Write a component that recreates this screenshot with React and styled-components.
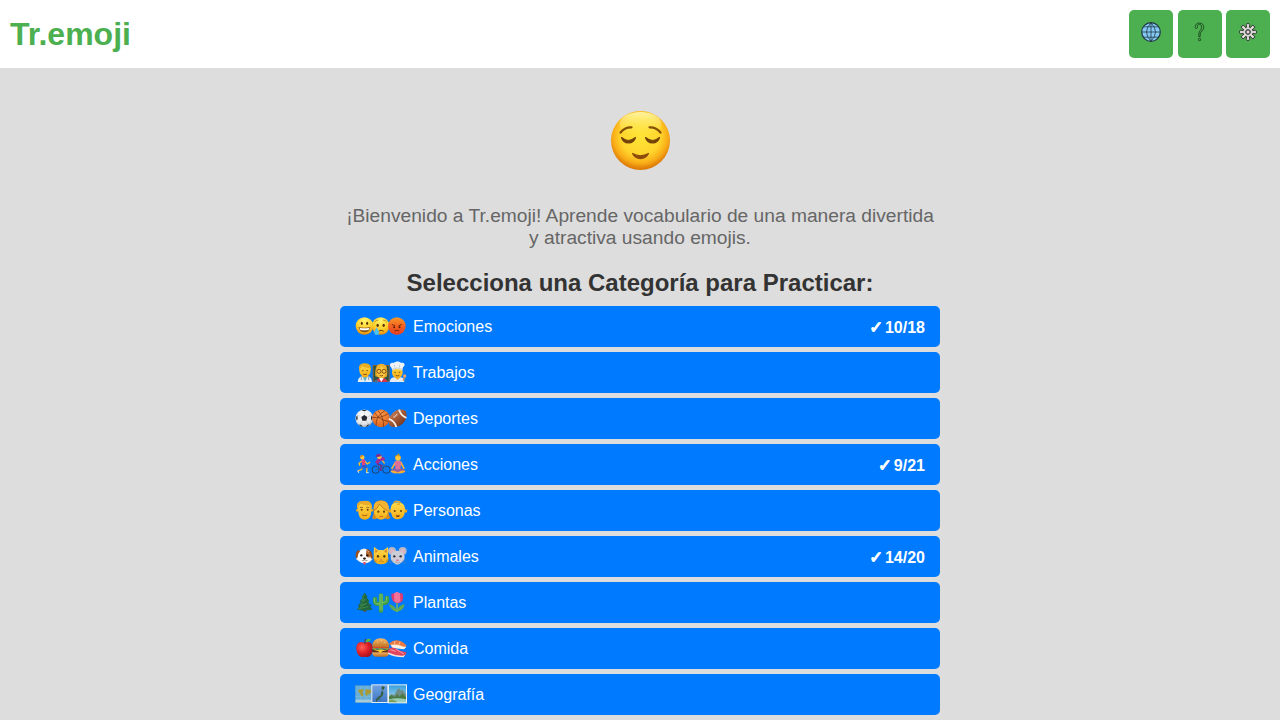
import React from 'react';
import styled, { createGlobalStyle } from 'styled-components';

const GlobalStyle = createGlobalStyle`
  * { box-sizing: border-box; }
  body {
    margin: 0;
    background: #ddd;
    font-family: "Liberation Sans", Arial, sans-serif;
    height: 100vh;
    overflow: hidden;
  }
`;

const Header = styled.header`
  height: 68px;
  padding: 10px;
  background: #fff;
  display: flex;
  justify-content: space-between;
`;
const Title = styled.h1`
  margin: 0;
  color: #4caf50;
  font-size: 32px;
  line-height: 48px;
`;
const Actions = styled.div`
  display: flex;
  gap: 4.45px;
`;
const ActionButton = styled.button`
  width: 44px;
  height: 48px;
  padding: 12px 0 0;
  border: 0;
  border-radius: 5px;
  background: #4caf50;
  display: flex;
  justify-content: center;
  align-items: flex-start;
  cursor: pointer;
`;
const ActionIcon = styled.svg`
  width: 20px;
  height: 20px;
`;
const Main = styled.main`
  width: 600px;
  margin: 0 auto;
  padding-top: 42px;
  display: flex;
  flex-direction: column;
  align-items: center;
`;
const Mascot = styled.svg`
  width: 61px;
  height: 61px;
  margin-left: 1px;
`;
const Welcome = styled.p`
  margin: 34px 0 0;
  font-size: 19.2px;
  line-height: 22px;
  color: #666;
  text-align: center;
`;
const Heading = styled.h2`
  margin: 20px 0 9px;
  font-size: 24px;
  line-height: 28px;
  color: #333;
`;
const List = styled.div`
  width: 100%;
  display: flex;
  flex-direction: column;
  gap: 5px;
`;
const Category = styled.button`
  height: 41px;
  padding: 0 15px;
  border: 0;
  border-radius: 5px;
  background: #007bff;
  color: #fff;
  font: 16px "Liberation Sans", Arial, sans-serif;
  display: flex;
  align-items: center;
  cursor: pointer;
`;
const EmojiStrip = styled.svg`
  width: 53px;
  height: 21px;
  margin-right: 5px;
  overflow: visible;
`;
const Name = styled.span`
  line-height: 18px;
`;
const Score = styled.span`
  margin-left: auto;
  padding-top: 2px;
  font-weight: bold;
  line-height: 18px;
  display: flex;
  gap: 2px;
`;
const Tick = styled.span`
  font-family: "DejaVu Sans", sans-serif;
  font-size: 16.5px;
  -webkit-text-stroke: 1.1px #fff;
`;

const Face = ({ x, fill = 'url(#yellow)', children }) => (
  <g transform={`translate(${x} 30)`}>
    <circle r="26.5" fill={fill} />
    {children}
  </g>
);

const Gradients = () => (
  <defs>
    <radialGradient id="yellow" cx=".5" cy=".2" r=".82">
      <stop offset="0" stopColor="#fff66a" /><stop offset=".6" stopColor="#ffce2a" /><stop offset=".85" stopColor="#f5a516" /><stop offset="1" stopColor="#d97a08" />
    </radialGradient>
    <radialGradient id="mascot" cx=".5" cy=".42" r=".56">
      <stop offset="0" stopColor="#ffe436" /><stop offset=".6" stopColor="#ffd52c" /><stop offset=".83" stopColor="#f9ad18" /><stop offset="1" stopColor="#dd7b07" />
    </radialGradient>
    <linearGradient id="shine" x2="0" y2="1">
      <stop offset="0" stopColor="#fffbb8" stopOpacity=".85" /><stop offset="1" stopColor="#fff05a" stopOpacity="0" />
    </linearGradient>
    <linearGradient id="red" x2="0" y2="1">
      <stop offset="0" stopColor="#f79a2b" /><stop offset=".5" stopColor="#f5631f" /><stop offset="1" stopColor="#e23c24" />
    </linearGradient>
    <linearGradient id="skin" x2="0" y2="1">
      <stop offset="0" stopColor="#ffdc4c" /><stop offset="1" stopColor="#f5ac17" />
    </linearGradient>
    <radialGradient id="ball" cx=".45" cy=".3" r=".75">
      <stop offset="0" stopColor="#fff" /><stop offset=".7" stopColor="#e2e5e8" /><stop offset="1" stopColor="#8a97a8" />
    </radialGradient>
    <radialGradient id="orange" cx=".45" cy=".3" r=".75">
      <stop offset="0" stopColor="#ff9b4a" /><stop offset="1" stopColor="#d9601a" />
    </radialGradient>
    <linearGradient id="brown" x2="0" y2="1">
      <stop offset="0" stopColor="#c27449" /><stop offset="1" stopColor="#7d3a21" />
    </linearGradient>
    <radialGradient id="apple" cx=".35" cy=".35" r=".75">
      <stop offset="0" stopColor="#ff6156" /><stop offset=".5" stopColor="#e0232a" /><stop offset="1" stopColor="#9a0f1b" />
    </radialGradient>
    <linearGradient id="bun" x2="0" y2="1">
      <stop offset="0" stopColor="#f5b967" /><stop offset="1" stopColor="#bf6f22" />
    </linearGradient>
    <linearGradient id="sky" x2="0" y2="1">
      <stop offset="0" stopColor="#3ba0dc" /><stop offset="1" stopColor="#b9e3ef" />
    </linearGradient>
    <linearGradient id="sea" x2="0" y2="1">
      <stop offset="0" stopColor="#6fa2e0" /><stop offset="1" stopColor="#3f76c4" />
    </linearGradient>
  </defs>
);

const Emotions = () => (
  <>
    <Face x={28.5}>
      <ellipse cx="-8" cy="-8" rx="3" ry="5" fill="#5b3206" /><ellipse cx="8" cy="-8" rx="3" ry="5" fill="#5b3206" />
      <path d="M-18 3Q0 7 18 3Q15 19 0 19T-18 3" fill="#8a5516" />
      <path d="M-15 5Q0 8 15 5L13 11Q0 14-13 11Z" fill="#fff" />
    </Face>
    <Face x={77}>
      <path d="M-19-11Q-14-18-7-18M7-18Q14-18 19-11" stroke="#a56d12" strokeWidth="2" fill="none" />
      <ellipse cx="-9" cy="-2" rx="3.5" ry="5" fill="#5b3206" /><ellipse cx="9" cy="-2" rx="3.5" ry="5" fill="#5b3206" />
      <path d="M-6 16Q1 9 9 16" stroke="#6b3a0b" strokeWidth="3" fill="none" />
      <path d="M-12 4C-9 11-4 15-5 20A7 7 0 0 1-19 20C-20 15-14 10-12 4Z" fill="#4cc0ef" />
    </Face>
    <Face x={125.5} fill="url(#red)">
      <path d="M-15-5L-5 0M15-5L5 0" stroke="#5b1d08" strokeWidth="2.5" />
      <circle cx="-8" cy="4" r="3" fill="#5b1d08" /><circle cx="8" cy="4" r="3" fill="#5b1d08" />
      <path d="M-7 15Q0 10 7 15" stroke="#5b1d08" strokeWidth="2.5" fill="none" />
    </Face>
  </>
);

const Jobs = () => (
  <>
    <path d="M8 60Q9 45 22 43H38Q50 45 51 60Z" fill="#e4edf4" />
    <path d="M22 43L30 55L38 43V38H22Z" fill="#e6a61e" /><path d="M24 46L30 60L36 46Z" fill="#5fb4d4" />
    <path d="M19 45V54M41 45V54" stroke="#587284" strokeWidth="2" />
    <ellipse cx="30" cy="25" rx="17" ry="20" fill="url(#skin)" />
    <path d="M12 24Q9 3 29 4Q50 3 48 25L44 18Q31 18 22 13Q17 16 12 24Z" fill="#e8ad22" />
    <path d="M21 26H26M34 26H39M24 36Q30 40 36 36" stroke="#7c4c0b" strokeWidth="2.5" fill="none" />

    <rect x="53" y="9" width="51" height="50" fill="#8b5c31" /><rect x="56" y="12" width="45" height="44" fill="#285747" />
    <path d="M61 60Q62 49 79 48T97 60Z" fill="#d4334b" /><path d="M72 48L79 60L86 48Z" fill="#fff" />
    <path d="M61 43Q58 4 80 5Q101 6 96 43Q89 50 79 48T61 43" fill="#e3a12a" />
    <ellipse cx="79" cy="30" rx="14" ry="18" fill="#fdc83d" /><path d="M65 23Q75 20 80 11Q84 20 94 24V12L80 6L66 12Z" fill="#f0b332" />
    <g fill="none" stroke="#6b3c18" strokeWidth="2.5"><circle cx="72" cy="28" r="6" /><circle cx="87" cy="28" r="6" /><path d="M74 40Q79 44 84 40" /></g>
    <path d="M61 53L71 57L68 63H61Z" fill="#3b78a8" />

    <path d="M104 60Q105 48 117 46H138Q148 48 148 60Z" fill="#e5eaee" /><path d="M120 46L127 53L136 46" fill="#e6a61e" />
    <ellipse cx="127" cy="31" rx="16" ry="18" fill="url(#skin)" />
    <path d="M112 24L108 15C100 9 108-1 116 3C122-3 134-3 138 3C148 0 153 9 144 16L142 25Q127 18 112 24Z" fill="#f0f3f5" />
    <path d="M113 21Q127 15 142 21M118 9L120 17M134 8L133 17" stroke="#b5c0c8" strokeWidth="2" fill="none" />
    <path d="M118 31H123M131 31H136M122 40Q127 44 133 40" stroke="#76470b" strokeWidth="2.5" fill="none" />
    <path d="M145 57L149 44" stroke="#d99652" strokeWidth="4" /><circle cx="149" cy="42" r="5" fill="#e3a466" />
  </>
);

const Sports = () => (
  <>
    <circle cx="28" cy="31" r="26.5" fill="url(#ball)" />
    <path d="M28 21L37 27L34 38H22L19 27ZM19 7Q28 3 36 7L28 10ZM3 28L7 22L8 33L5 38ZM53 28L49 22L48 33L51 38ZM12 48L20 52L23 57Q16 56 12 48ZM44 48L36 52L33 57Q40 56 44 48Z" fill="#242a31" />
    <path d="M28 20V12M39 27L48 20M35 40L39 50M21 40L17 50M17 27L8 20" stroke="#aab2ba" strokeWidth="1.2" />
    <circle cx="78" cy="31" r="26.5" fill="url(#orange)" />
    <path d="M68 7Q86 24 86 57M52 28Q77 32 101 16M90 8Q62 23 63 53M59 13Q69 35 102 41" stroke="#6a2c14" strokeWidth="2" fill="none" />
    <g transform="translate(128 31) rotate(-42)">
      <path d="M-33 0Q-24-21 0-22T33 0Q24 21 0 22T-33 0" fill="url(#brown)" />
      <path d="M-23-15Q-15 0-23 15L-18 18Q-9 0-18-18ZM23-15Q15 0 23 15L18 18Q9 0 18-18Z" fill="#f5eee5" />
      <path d="M-8-10H9M-5-13V-7M0-13V-7M5-13V-7" stroke="#fff" strokeWidth="1.5" />
    </g>
  </>
);

const Activities = () => (
  <>
    <g fill="none" strokeLinecap="round" strokeLinejoin="round">
      <path d="M24 36L20 46L9 51M27 36L36 43L35 55M28 20L37 30L44 25M21 21L12 28L14 34" stroke="#f7b928" strokeWidth="4" />
      <path d="M25 20L26 33" stroke="#e6407f" strokeWidth="10" /><path d="M24 36L22 41M28 36L33 41" stroke="#4054bd" strokeWidth="6" />
      <path d="M9 51L11 56M35 56H40" stroke="#d8e6f5" strokeWidth="3" />
    </g>
    <circle cx="22" cy="10" r="6.5" fill="#fec940" /><path d="M15 9Q16 1 26 4L21 8L17 12Z" fill="#d89118" />

    <g fill="none" stroke="#253849" strokeWidth="2.5"><circle cx="62" cy="47" r="11" /><circle cx="94" cy="47" r="11" /><path d="M62 47L70 34H87L78 48ZM87 34L94 47M68 32H74M84 29H90" stroke="#396699" /></g>
    <path d="M84 15Q75 12 67 24" stroke="#a62c95" strokeWidth="11" strokeLinecap="round" fill="none" />
    <path d="M66 29L80 35L75 48H81" stroke="#653090" strokeWidth="5" fill="none" /><path d="M82 20L89 28" stroke="#f7b928" strokeWidth="4" />
    <circle cx="73" cy="8" r="7" fill="#fdc83d" /><path d="M62 8Q63-3 75 0L81 6L69 9Z" fill="#7a3194" />

    <path d="M122 24L111 43M137 24L147 43" stroke="#f5af3b" strokeWidth="5" strokeLinecap="round" />
    <path d="M119 24Q129 17 139 24L136 47H122Z" fill="#dc709b" />
    <path d="M120 43Q108 48 108 53Q129 61 151 53Q150 47 137 43L129 49Z" fill="#9b5d99" />
    <path d="M106 51Q114 46 128 55Q143 46 152 51Q146 60 128 58Q111 60 106 51" fill="#f4ad38" />
    <circle cx="129" cy="12" r="8.5" fill="#fdc83d" /><path d="M120 13Q119 3 128 3Q126-2 131-1T131 4Q139 5 138 14L134 7H124Z" fill="#d99a20" />
  </>
);

const People = () => (
  <>
    <circle cx="7" cy="31" r="4" fill="#efaa1f" /><circle cx="51" cy="31" r="4" fill="#efaa1f" />
    <path d="M8 20Q9 3 29 3T50 20L48 43Q44 59 29 59T11 43Z" fill="url(#skin)" />
    <path d="M6 26Q2 1 24 3Q52-3 52 26L47 22L44 14Q30 18 17 11Q11 15 10 25Z" fill="#e8ab2c" />
    <g fill="#65400f"><circle cx="20" cy="29" r="3" /><circle cx="38" cy="29" r="3" /></g>
    <path d="M15 23Q20 20 24 23M34 23Q38 20 43 23M21 45Q29 49 37 45" stroke="#8d5713" strokeWidth="2.5" fill="none" />

    <path d="M51 53Q58 43 56 27Q55 1 79 1Q102 2 101 28Q99 44 106 53Q98 61 90 55H66Q58 61 51 53" fill="#d98a18" />
    <ellipse cx="78" cy="34" rx="21" ry="25" fill="url(#skin)" />
    <path d="M57 33Q52 4 74 3Q104-1 102 35Q82 26 73 12Q70 26 57 33Z" fill="#f3b231" />
    <path d="M56 32Q70 25 73 12Q83 27 101 34" stroke="#ad670f" strokeWidth="2" fill="none" />
    <g fill="#65400f"><circle cx="70" cy="35" r="3.3" /><circle cx="87" cy="35" r="3.3" /></g>
    <path d="M71 47Q78 50 86 47Q79 55 71 47Z" fill="#b33a22" />

    <circle cx="105" cy="33" r="5" fill="#eca51d" /><circle cx="152" cy="33" r="5" fill="#eca51d" />
    <path d="M107 25Q108 7 128 7T150 25Q151 57 129 58T107 25" fill="url(#skin)" />
    <path d="M116 9Q121 2 128 4Q139 4 134 11Q130 15 126 11" stroke="#e9a824" strokeWidth="4" fill="none" />
    <g fill="#65400f"><circle cx="119" cy="33" r="3" /><circle cx="138" cy="33" r="3" /></g>
    <path d="M122 44Q128 48 135 44L132 51H125Z" fill="#88451a" />
  </>
);

const Animals = () => (
  <>
    <path d="M9 18Q27-3 45 17L52 40Q43 52 30 52T4 40Z" fill="#f4eee8" />
    <path d="M12 12Q0 15 2 33Q5 39 10 32L16 18ZM35 9Q52 11 53 35Q50 42 44 34Q33 34 33 24Z" fill="#985020" />
    <path d="M14 17Q7 23 8 35Q10 50 28 50Q47 49 47 35L41 16Q27 8 14 17" fill="#fff" /><path d="M34 13Q48 20 45 34Q32 36 33 23Z" fill="#b36b32" />
    <g fill="#291e19"><circle cx="19" cy="28" r="3.5" /><circle cx="37" cy="28" r="3.5" /><path d="M23 36Q28 33 34 36L30 41H27Z" /></g>
    <path d="M20 43Q27 48 28 41Q31 48 38 43" stroke="#493529" strokeWidth="1.5" fill="none" /><path d="M25 48H32V54Q29 59 25 54Z" fill="#ed4b65" />

    <path d="M57 3L71 13Q78 11 85 13L99 3L99 26Q105 54 79 55T56 26Z" fill="url(#skin)" />
    <path d="M60 8L69 16L61 21ZM96 8L87 16L95 21Z" fill="#d7862b" />
    <g fill="#50410d"><ellipse cx="69" cy="31" rx="3.5" ry="4" /><ellipse cx="88" cy="31" rx="3.5" ry="4" /></g><path d="M75 38H82L79 42Z" fill="#cf6e5e" />
    <path d="M72 46Q79 50 79 42Q80 50 87 46M55 41L65 43M54 48L65 46M103 41L93 43M103 48L93 46" stroke="#9e721b" strokeWidth="1.5" fill="none" />

    <circle cx="111" cy="15" r="12" fill="#b5b7c3" /><circle cx="143" cy="15" r="12" fill="#b5b7c3" /><circle cx="111" cy="16" r="7" fill="#ddb4c0" /><circle cx="143" cy="16" r="7" fill="#ddb4c0" />
    <path d="M107 31Q109 13 127 14T149 31Q149 47 134 53Q127 58 120 53Q106 47 107 31" fill="#cccdd7" />
    <g fill="#302d34"><circle cx="118" cy="31" r="3.5" /><circle cx="137" cy="31" r="3.5" /></g><ellipse cx="127" cy="43" rx="4" ry="3.5" fill="#e67f96" />
    <path d="M119 48Q127 54 136 48M113 44L101 41M113 48L101 52M142 44L154 41M142 48L154 52" stroke="#80818c" strokeWidth="1.3" fill="none" />
  </>
);

const Plants = () => (
  <>
    <path d="M25 43H33V59H25Z" fill="#764524" />
    <path d="M29 2L38 15L35 17L44 28L39 30L50 42L45 44L53 52Q29 60 5 52L13 44L8 42L18 30L14 28L23 17L20 15Z" fill="#21673d" />
    <path d="M28 8L20 26L31 22L15 41L34 34L11 50L40 44" stroke="#4b9252" strokeWidth="2" fill="none" />
    <path d="M78 56V10M60 21V28Q60 37 77 37M96 18V27Q95 34 79 33" stroke="#3f9c4a" strokeWidth="13" strokeLinecap="round" fill="none" />
    <path d="M75 6V55M81 6V56M58 18V30Q63 38 75 36M95 14V26Q93 31 83 32" stroke="#7ecb68" strokeWidth="3" fill="none" />
    <path d="M126 59Q107 57 102 36Q119 40 126 56Q131 40 149 37Q146 57 126 59" fill="#5fa94f" /><path d="M126 25V60" stroke="#7fb94f" strokeWidth="4" />
    <path d="M109 5Q118 2 125 10Q131 0 143 5Q149 32 128 34Q108 31 109 5" fill="#dd3b72" /><path d="M117 4L126-1L135 4L136 28Q127 37 118 28Z" fill="#f0719a" />
  </>
);

const Food = () => (
  <>
    <path d="M29 15C13 6 2 18 4 34C6 52 17 61 29 56C42 61 53 50 53 33C54 15 42 7 29 15Z" fill="url(#apple)" />
    <path d="M29 18Q28 9 33 3" stroke="#69411c" strokeWidth="3.5" fill="none" /><path d="M32 11Q35-1 48 4Q44 15 32 11" fill="#65b833" />
    <path d="M52 24Q53 1 77 1T102 24V28H52Z" fill="url(#bun)" /><path d="M52 42H102Q103 55 91 56H63Q51 55 52 42Z" fill="url(#bun)" />
    <path d="M52 34H102V43H52Z" fill="#60301d" /><path d="M51 31L59 28L66 33L74 28L82 33L91 28L103 31L97 36L88 33L78 38L69 34L59 37Z" fill="#79b540" />
    <path d="M54 27H101V31H54Z" fill="#d74a29" /><path d="M58 36H97L82 40L76 46L70 40Z" fill="#ffcd32" />
    <path d="M66 12H69M78 8H81M88 14H91" stroke="#ffe5b5" strokeWidth="2" />
    <path d="M106 19L140 16L154 27L147 34L112 30Z" fill="#f8f2e5" /><path d="M104 16Q116 3 136 9Q149 13 155 24Q148 29 138 23Q120 17 104 21Z" fill="#ed7941" />
    <path d="M120 9L118 18M135 11L132 20" stroke="#ffc08d" strokeWidth="3" />
    <path d="M99 43Q123 39 152 48L146 58Q119 58 100 48Z" fill="#eee9e1" /><path d="M98 38Q105 24 120 31Q139 41 154 43Q155 53 143 53Q120 54 98 43Z" fill="#e0455f" />
    <path d="M106 35L122 40M123 34L147 48" stroke="#ff97a3" strokeWidth="3" />
  </>
);

const Geography = () => (
  <>
    <rect x="1" y="5" width="50" height="51" fill="#67afd9" stroke="#7898aa" />
    <path d="M2 21H50M2 37H50M18 5V55M35 5V55" stroke="#9bcbe0" strokeWidth="1" /><path d="M2 47H50V55H2Z" fill="#a7cbd9" />
    <path d="M9 18Q20 14 27 17L22 26L25 31L23 39L17 34L15 27L10 24ZM31 16L49 17V27L44 26L45 33L38 29L36 39L31 30Z" fill="#a99a35" />
    <rect x="49" y="1" width="51" height="56" fill="#e4edf1" /><rect x="52" y="4" width="45" height="50" fill="url(#sea)" />
    <path d="M81 7L89 10L85 17L80 15ZM81 19L85 27L81 37L73 42L65 50L63 46L70 38L77 35Z" fill="#355c37" stroke="#355c37" /><path d="M64 49L67 54L62 54ZM71 46L78 43L75 48Z" fill="#355c37" />
    <rect x="99" y="1" width="57" height="57" fill="#edf4ef" /><rect x="102" y="4" width="51" height="51" fill="url(#sky)" />
    <path d="M102 36L110 30L117 34L125 20L131 12L138 20L143 17L153 31V48H102Z" fill="#6f8d86" /><path d="M102 40L110 33L119 40L127 31L134 38L142 28L153 40V48H102Z" fill="#4b7a45" />
    <path d="M102 46Q128 39 153 46V55H102Z" fill="#9bcdb9" /><path d="M102 49Q114 42 127 55H102Z" fill="#7fa05a" />
  </>
);

const categories = [
  { name: 'Emociones', Art: Emotions, score: '10/18' },
  { name: 'Trabajos', Art: Jobs },
  { name: 'Deportes', Art: Sports },
  { name: 'Acciones', Art: Activities, score: '9/21' },
  { name: 'Personas', Art: People },
  { name: 'Animales', Art: Animals, score: '14/20' },
  { name: 'Plantas', Art: Plants },
  { name: 'Comida', Art: Food },
  { name: 'Geografía', Art: Geography },
];

export default function App() {
  return (
    <>
      <GlobalStyle />
      <Header>
        <Title>Tr.emoji</Title>
        <Actions>
          <ActionButton aria-label="Idioma">
            <ActionIcon viewBox="0 0 20 20" fill="none" stroke="#233847">
              <circle cx="10" cy="10" r="9.3" fill="#83c9f4" strokeWidth="1.2" />
              <path d="M10 .8V19.2M.8 10H19.2M2.7 4.8H17.3M2.7 15.2H17.3M10 .8Q1 10 10 19.2M10 .8Q19 10 10 19.2" strokeWidth=".8" />
            </ActionIcon>
          </ActionButton>
          <ActionButton aria-label="Ayuda">
            <ActionIcon viewBox="0 0 20 20" fill="none" stroke="#173e1a" strokeWidth=".85">
              <path d="M5.2 5.6C5 2.6 6.8 1 9.4 1S13.8 2.6 13.8 5.3C13.8 8.6 10.2 9.4 10.2 12.4V14.7H8.8V12.2C8.8 8.9 11.6 8.2 11.6 5.3C11.6 3.3 10.7 2.3 9.4 2.3S7.3 3.2 7.5 4.6C7.8 6.6 5.3 7.2 5.2 5.6Z" />
              <circle cx="9.5" cy="17.6" r="1.2" />
            </ActionIcon>
          </ActionButton>
          <ActionButton aria-label="Ajustes">
            <ActionIcon viewBox="0 0 20 20" stroke="#302e31" strokeWidth=".9">
              <g fill="#dcd8d6">
                {[0, 45, 90, 135, 180, 225, 270, 315].map((a) => (
                  <path key={a} d="M8.8 7L8.3 2.5Q8.3 1.5 10 1.5T11.7 2.5L11.2 7Z" transform={`rotate(${a} 10 10)`} />
                ))}
              </g>
              <circle cx="10" cy="10" r="4.6" fill="#dcd8d6" stroke="none" />
              <circle cx="10" cy="10" r="2.4" fill="#8b858c" /><circle cx="10" cy="10" r="1" fill="#fff" stroke="none" />
            </ActionIcon>
          </ActionButton>
        </Actions>
      </Header>
      <Main>
        <Mascot viewBox="0 0 61 61" fill="none" strokeLinecap="round">
          <Gradients />
          <circle cx="30.5" cy="30.5" r="29.5" fill="url(#mascot)" />
          <ellipse cx="30.5" cy="14" rx="21" ry="12" fill="url(#shine)" />
          <path d="M10.5 22.5Q14.5 17 21.5 17.3M39.5 17.3Q46.5 17 50.5 22.5" stroke="#855006" strokeWidth="2.2" />
          <path d="M11.5 27.5Q18 33.5 25.5 27.5Q24 32.8 18.5 32.8T11.5 27.5ZM35.5 27.5Q43 33.5 49.5 27.5Q48 32.8 42.5 32.8T35.5 27.5Z" fill="#72420b" stroke="#72420b" strokeWidth="1.2" strokeLinejoin="round" />
          <path d="M22.5 43.5Q30.5 48 38.5 43.5Q36 48.6 30.5 48.6T22.5 43.5Z" fill="#8e4c0b" stroke="#8e4c0b" strokeWidth="1.2" strokeLinejoin="round" />
        </Mascot>
        <Welcome>¡Bienvenido a Tr.emoji! Aprende vocabulario de una manera divertida y atractiva usando emojis.</Welcome>
        <Heading>Selecciona una Categoría para Practicar:</Heading>
        <List>
          {categories.map(({ name, Art, score }) => (
            <Category key={name}>
              <EmojiStrip viewBox="0 0 159 63"><Art /></EmojiStrip>
              <Name>{name}</Name>
              {score && <Score><Tick>✓</Tick>{score}</Score>}
            </Category>
          ))}
        </List>
      </Main>
    </>
  );
}
